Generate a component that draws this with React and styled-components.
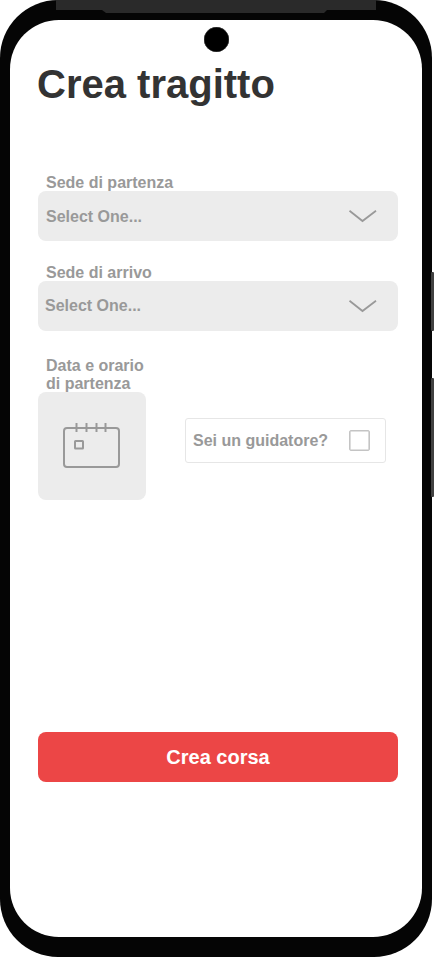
import React from "react";
import styled, { createGlobalStyle } from "styled-components";

const GlobalStyle = createGlobalStyle`
  *, *::before, *::after { box-sizing: border-box; }
  body {
    margin: 0;
    background: #fff;
    overflow: hidden;
    font-family: "Liberation Sans", Arial, sans-serif;
  }
  button { font: inherit; border: 0; padding: 0; margin: 0; }
`;

const Phone = styled.div`
  position: relative;
  width: 432px;
  height: 957px;
  padding: 20px 10px;
  background: #050505;
  border-radius: 58px;
`;

const Bezel = styled.div`
  position: absolute;
  top: 0;
  left: 56px;
  width: 320px;
  height: 10px;
  background: #2a2a2a;
`;

const Speaker = styled.div`
  position: absolute;
  top: 10px;
  left: 102px;
  width: 225px;
  height: 3px;
  background: #2a2a2a;
  clip-path: polygon(0 0, 100% 0, calc(100% - 3px) 100%, 4px 100%);
`;

const SideKey = styled.div`
  position: absolute;
  left: 431px;
  top: ${(p) => p.$top}px;
  width: 3px;
  height: ${(p) => p.$height}px;
  background: #414141;
  border-radius: 1px;
`;

const Camera = styled.div`
  position: absolute;
  top: 27px;
  left: 203.5px;
  width: 25px;
  height: 25px;
  border-radius: 50%;
  background: #000;
  box-shadow: inset 0 0 0 0.5px #444;
`;

const Screen = styled.main`
  display: flex;
  flex-direction: column;
  width: 412px;
  height: 917px;
  padding: 41px 24px 0 28px;
  background: #fff;
  border-radius: 49px;
`;

const Title = styled.h1`
  margin: 0 0 67px -1px;
  font-size: 40px;
  line-height: 46px;
  color: #333;
`;

const Form = styled.form`
  display: flex;
  flex-direction: column;
`;

const Field = styled.div`
  display: flex;
  flex-direction: column;
  margin-bottom: ${(p) => p.$gap}px;
`;

const Label = styled.label`
  height: ${(p) => p.$height || 17}px;
  padding-left: 8px;
  font-size: 16px;
  font-weight: 700;
  line-height: 18px;
  color: #999;
  white-space: pre-line;
`;

const Select = styled.button`
  display: flex;
  align-items: center;
  justify-content: space-between;
  width: 360px;
  height: 50px;
  padding: 0 20px 0 ${(p) => p.$inset}px;
  border-radius: 8px;
  background: #ececec;
`;

const SelectText = styled.span`
  padding-top: ${(p) => p.$drop}px;
  font-size: 16px;
  font-weight: 700;
  line-height: 18px;
  color: #999;
`;

const BottomRow = styled.div`
  display: flex;
  align-items: flex-start;
`;

const DateButton = styled.button`
  display: flex;
  align-items: center;
  justify-content: center;
  width: 108px;
  height: 108px;
  padding-bottom: 2px;
  border-radius: 8px;
  background: #ececec;
`;

const DriverOption = styled.label`
  display: flex;
  align-items: center;
  justify-content: space-between;
  width: 201px;
  height: 45px;
  margin: 61px 0 0 39px;
  padding: 0 15px 0 7px;
  border: 1px solid #e6e6e6;
  border-radius: 3px;
  font-size: 16px;
  font-weight: 700;
  line-height: 18px;
  color: #999;
`;

const Checkbox = styled.input`
  appearance: none;
  width: 21px;
  height: 21px;
  margin: 0;
  border: 1px solid #c4c4c4;
  border-radius: 2px;
  background: #fff;
  box-shadow: inset 0 0 0 0.6px #c4c4c4;
`;

const Submit = styled.button`
  width: 360px;
  height: 50px;
  margin-top: 232px;
  border-radius: 8px;
  background: #ec4646;
  color: #fff;
  && { font-size: 20px; font-weight: 700; }
`;

const Chevron = () => (
  <svg width="30" height="14" viewBox="0 0 30 14" fill="none" stroke="#999" strokeWidth="1.8">
    <path d="M1.5 1.7 14.5 12 28 1.7" />
  </svg>
);

const Calendar = () => (
  <svg width="58" height="46" viewBox="0 0 58 46" fill="none" stroke="#999" strokeWidth="2">
    <rect x="1" y="6" width="55" height="39" rx="3" />
    <path d="M13.5 1v9M23.5 1v9M33.5 1v9M42.5 1v9" />
    <rect x="12" y="19" width="8" height="7.5" rx=".5" />
  </svg>
);

const SelectField = ({ label, gap, inset, drop }) => (
  <Field $gap={gap}>
    <Label>{label}</Label>
    <Select type="button" $inset={inset}>
      <SelectText $drop={drop}>Select One...</SelectText>
      <Chevron />
    </Select>
  </Field>
);

export default function App() {
  return (
    <>
      <GlobalStyle />
      <Phone>
        <Bezel />
        <Speaker />
        <SideKey $top={272} $height={59} />
        <SideKey $top={378} $height={119} />
        <Screen>
          <Title>Crea tragitto</Title>
          <Form>
            <SelectField label="Sede di partenza" gap={23} inset={8} drop={2} />
            <SelectField label="Sede di arrivo" gap={26} inset={7} drop={0} />
            <BottomRow>
              <Field $gap={0}>
                <Label $height={35}>{"Data e orario\ndi partenza"}</Label>
                <DateButton type="button" aria-label="Data e orario">
                  <Calendar />
                </DateButton>
              </Field>
              <DriverOption>
                Sei un guidatore?
                <Checkbox type="checkbox" />
              </DriverOption>
            </BottomRow>
            <Submit type="button">Crea corsa</Submit>
          </Form>
        </Screen>
        <Camera />
      </Phone>
    </>
  );
}
